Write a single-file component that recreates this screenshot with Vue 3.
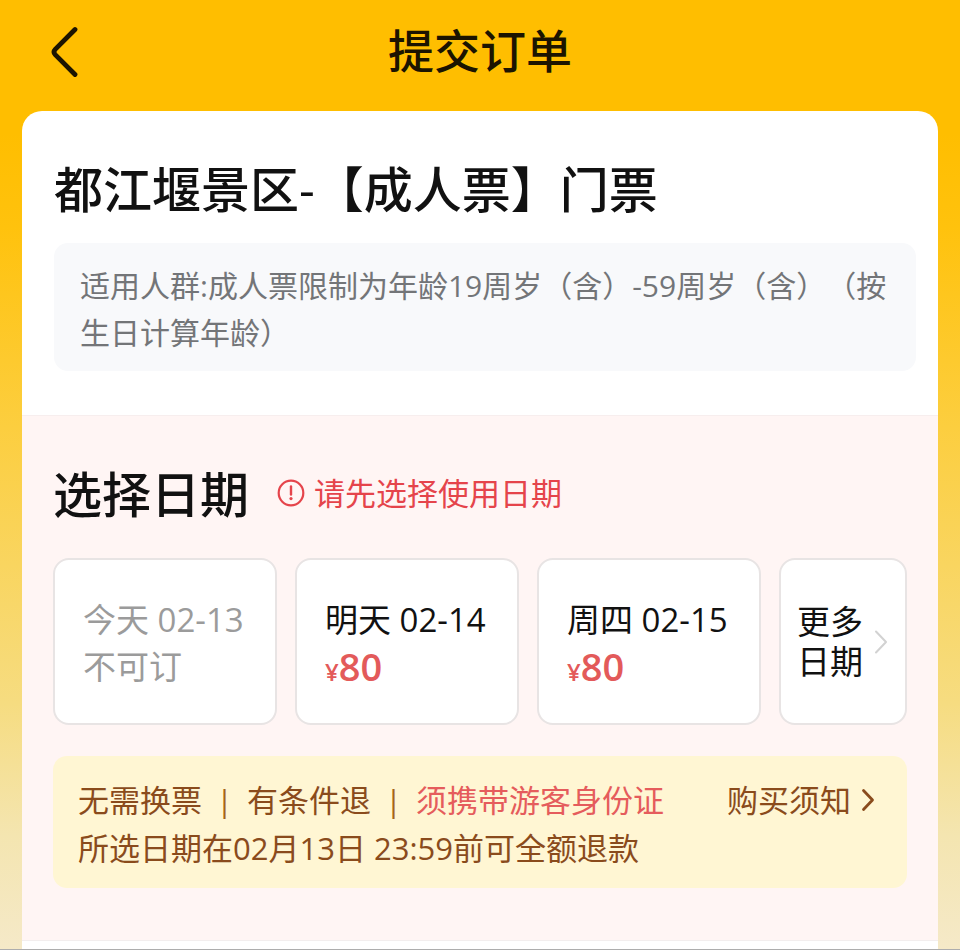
<script setup>
const dates = [
  { day: '今天', date: '02-13', price: null },
  { day: '明天', date: '02-14', price: 80 },
  { day: '周四', date: '02-15', price: 80 },
]
</script>

<template>
  <div class="page">
    <header class="topbar">
      <button class="back" type="button" aria-label="返回">
        <svg width="28" height="52" viewBox="0 0 28 52" fill="none">
          <path d="M25 3.5 5.2 23.4Q2.8 26 5.2 28.6L25 48.5" stroke="currentColor" stroke-width="4.8" stroke-linecap="round" stroke-linejoin="round" />
        </svg>
      </button>
      <h1>提交订单</h1>
    </header>

    <main class="card">
      <section class="product">
        <h2>都江堰景区-【成人票】门票</h2>
        <p class="crowd">适用人群:成人票限制为年龄19周岁（含）-59周岁（含）（按生日计算年龄）</p>
      </section>

      <section class="booking">
        <div class="booking-head">
          <h2>选择日期</h2>
          <p class="warning">
            <svg width="28" height="28" viewBox="0 0 28 28" fill="none">
              <circle cx="14" cy="14" r="12.3" stroke="currentColor" stroke-width="2.2" />
              <path d="M14 7.5V15.5" stroke="currentColor" stroke-width="2.4" stroke-linecap="round" />
              <circle cx="14" cy="19.6" r="1.6" fill="currentColor" />
            </svg>
            <span>请先选择使用日期</span>
          </p>
        </div>

        <div class="dates">
          <button v-for="d in dates" :key="d.date" class="date" type="button" :disabled="d.price === null">
            <span>{{ d.day }} {{ d.date }}</span>
            <span v-if="d.price === null">不可订</span>
            <span v-else class="price"><small>¥</small>{{ d.price }}</span>
          </button>
          <button class="date more" type="button">
            <span class="more-label">更多<br>日期</span>
            <svg width="14" height="24" viewBox="0 0 14 24" fill="none">
              <path d="M2 1.5 12 12 2 22.5" stroke="#d2d2d2" stroke-width="2" stroke-linecap="round" stroke-linejoin="round" />
            </svg>
          </button>
        </div>

        <div class="rules">
          <div class="rules-row">
            <span>无需换票</span>
            <span class="bar">|</span>
            <span>有条件退</span>
            <span class="bar">|</span>
            <span class="must">须携带游客身份证</span>
            <a class="notice" href="#">
              购买须知
              <svg width="14" height="24" viewBox="0 0 14 24" fill="none">
                <path d="M2.5 2.5 11.5 12 2.5 21.5" stroke="currentColor" stroke-width="2.8" stroke-linecap="round" stroke-linejoin="round" />
              </svg>
            </a>
          </div>
          <p>所选日期在02月13日 23:59前可全额退款</p>
        </div>
      </section>
    </main>
  </div>
</template>

<style>
body {
  margin: 0;
}
</style>

<style scoped>
.page {
  box-sizing: border-box;
  min-height: 100vh;
  display: flex;
  flex-direction: column;
  border-bottom: 1px solid #adadad;
  background: linear-gradient(#ffbe00 0, #ffbe00 14%, #ffc20d 24%, #fcce3f 45%, #f6dc80 74%, #f4e5b0 88%, #f5e9c8 100%);
  font-family: "Open Sans", "Noto Sans CJK SC", sans-serif;
  text-spacing-trim: space-all;
  color: #111;
}

h1, h2, p {
  margin: 0;
}

button {
  font: inherit;
  color: inherit;
  cursor: pointer;
}

svg {
  display: block;
  flex: none;
}

.topbar {
  display: grid;
  grid-template-columns: 1fr auto 1fr;
  align-items: center;
  padding: 18px 50px 25px;
}

.back {
  justify-self: start;
  padding: 0;
  border: 0;
  background: none;
  color: #1c1400;
}

h1 {
  padding-bottom: 4px;
  font-size: 46px;
  line-height: 64px;
  font-weight: 500;
  color: #1c1400;
}

.card {
  flex: 1;
  margin: 0 22px;
  border-radius: 20px 20px 0 0;
  background: #fff;
  overflow: hidden;
}

h2 {
  font-size: 49px;
  line-height: 60px;
  font-weight: 500;
}

.product {
  padding: 48px 22px 44px 32px;
}

.crowd {
  margin-top: 24px;
  padding: 19px 20px 15px 26px;
  border-radius: 14px;
  background: #f8f9fb;
  color: #737578;
  font-size: 30px;
  line-height: 47px;
}

.booking {
  padding: 49px 31px 53px;
  background: #fff5f4;
  box-shadow: inset 0 1px #f7eeee, inset 0 -1px #f3eeee;
}

.booking-head {
  display: flex;
  align-items: center;
  gap: 28px;
}

.warning {
  display: flex;
  align-items: center;
  gap: 9px;
  padding-bottom: 3px;
  color: #e5444b;
  font-size: 31px;
  line-height: 48px;
}

.dates {
  display: grid;
  grid-template-columns: 224fr 224fr 224fr 128fr;
  gap: 18px;
  margin-top: 34px;
}

.date {
  display: flex;
  flex-direction: column;
  align-items: flex-start;
  padding: 36px 0 33px 28px;
  border: 2px solid #e8e4e4;
  border-radius: 16px;
  background: #fff;
  font-size: 33px;
  line-height: 47px;
  white-space: nowrap;
}

.date:disabled {
  color: #9b9b9b;
  cursor: default;
}

.price {
  color: #e35a5a;
  font-size: 38px;
  font-weight: 600;
}

.price small {
  font-size: 24px;
  line-height: 1;
}

.more {
  flex-direction: row;
  align-items: center;
  justify-content: space-between;
  padding: 0 17px 0 16px;
}

.more-label {
  line-height: 40px;
}

.rules {
  margin-top: 31px;
  padding: 20px 32px 16px 25px;
  border-radius: 14px;
  background: #fff6d3;
  color: #8a4b1c;
  font-size: 31px;
  line-height: 48px;
}

.rules-row {
  display: flex;
  align-items: center;
  gap: 14px;
  white-space: nowrap;
}

.bar {
  color: #a5641a;
}

.must {
  color: #e55c5c;
}

.notice {
  display: flex;
  align-items: center;
  gap: 10px;
  margin-left: auto;
  color: inherit;
  text-decoration: none;
}
</style>
